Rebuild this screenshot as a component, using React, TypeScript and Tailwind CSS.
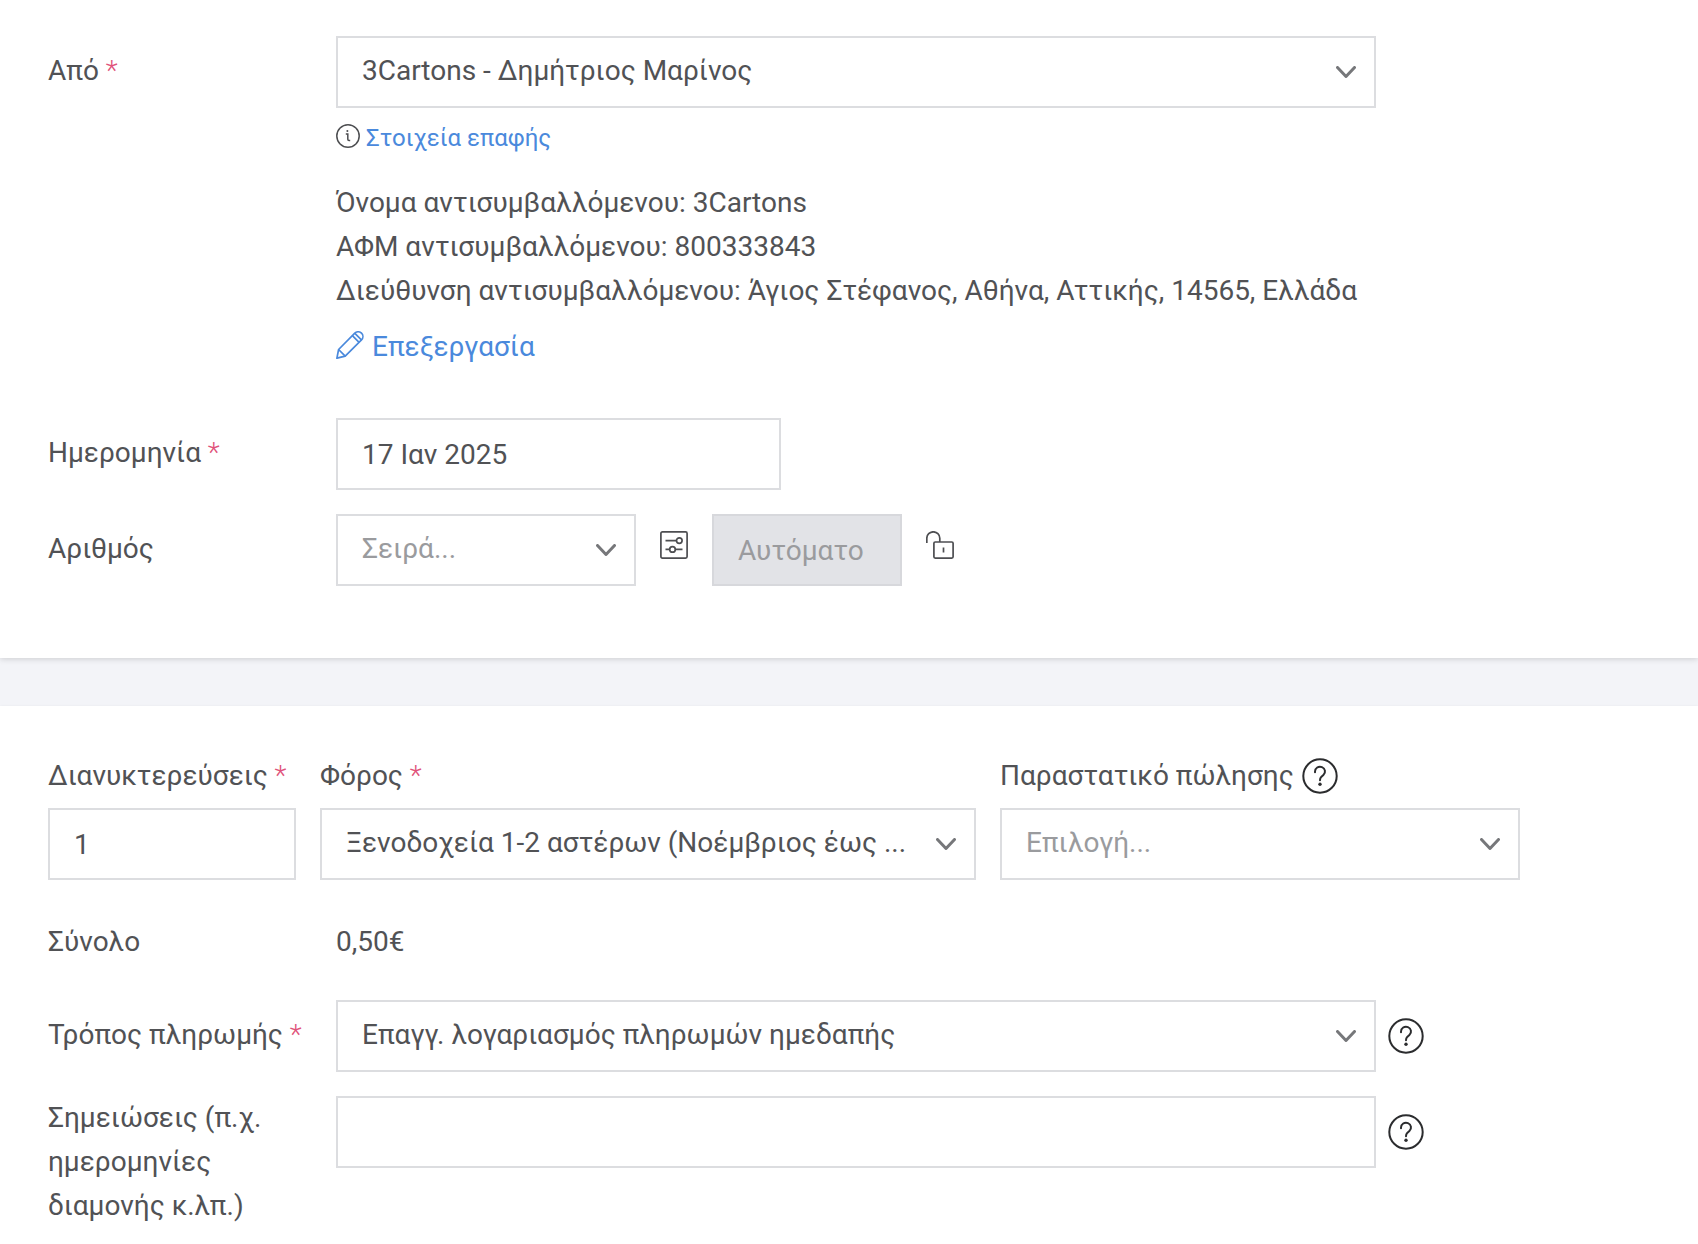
import type { ReactNode } from "react";

const fieldStyle =
  "block h-[72px] w-full rounded-none border-2 border-[#dcdde0] bg-white px-6 outline-none focus:border-[#4a89dc]";

const Required = () => <span className="font-light text-[#e0527a]"> *</span>;

const ChevronIcon = () => (
  <svg
    className="pointer-events-none absolute right-5 top-1/2 h-3 w-5 -translate-y-1/2"
    viewBox="0 0 20 12"
    fill="none"
    stroke="#76777a"
    strokeWidth="3"
    strokeLinecap="round"
    strokeLinejoin="round"
  >
    <path d="M1.5 1.5 10 10.5l8.5-9" />
  </svg>
);

const InfoIcon = () => (
  <svg className="mb-1 h-6 w-6" viewBox="0 0 24 24" fill="none" stroke="#4d4e51" strokeWidth="1.5">
    <circle cx="12" cy="12" r="11.2" />
    <path d="M9.8 10h2v5.2q0 1.2 1.2 1.2h1.2" />
    <circle cx="11.4" cy="7" r="1" fill="#4d4e51" stroke="none" />
  </svg>
);

const PencilIcon = () => (
  <svg
    className="mb-1 h-7 w-7"
    viewBox="0 0 28 28"
    fill="none"
    stroke="currentColor"
    strokeWidth="1.7"
    strokeLinejoin="round"
  >
    <path d="M.9 27.2 2.6 18.5 18.8 2.2a4.7 4.7 0 0 1 6.7 6.7L9.2 25.2z" />
    <path d="m2.6 18.5 6.6 6.7M16.4 4.6l6.7 6.7M18.9 2.4l6.5 6.5" />
  </svg>
);

const SettingsIcon = () => (
  <svg className="h-7 w-7" viewBox="0 0 28 28" fill="none" stroke="#4d4e51" strokeWidth="1.7">
    <rect x="0.9" y="0.9" width="26.2" height="26.2" rx="1.5" />
    <path d="M5.5 9.6h11M5.5 18.4h4.2M15.3 18.4h7.2" />
    <circle cx="19.3" cy="9.6" r="2.8" />
    <circle cx="12.5" cy="18.4" r="2.8" />
  </svg>
);

const UnlockIcon = () => (
  <svg className="h-7 w-7" viewBox="0 0 28 28" fill="none" stroke="#4d4e51" strokeWidth="1.7">
    <path d="M.8 12V7.3a6.5 6.5 0 0 1 13 0V11" />
    <rect x="7.9" y="11" width="19.2" height="16.1" rx="1.3" />
    <path d="M17.5 16.5v5" />
  </svg>
);

const HelpButton = () => (
  <button type="button" aria-label="Βοήθεια" className="shrink-0 cursor-pointer">
    <svg className="h-9 w-9" viewBox="0 0 36 36" fill="none" stroke="#2b2c2e" strokeWidth="2">
      <circle cx="18" cy="18" r="16.7" />
      <path d="M13 14.2v-.6a5 4.8 0 1 1 8.4 3.4l-2.2 2c-.9.8-1.2 1.5-1.2 3.2" strokeLinecap="round" />
      <circle cx="18" cy="26.3" r="1.7" fill="#2b2c2e" stroke="none" />
    </svg>
  </button>
);

type SelectProps = {
  id: string;
  options: string[];
  placeholder?: boolean;
};

const SelectField = ({ id, options, placeholder }: SelectProps) => (
  <div className="relative">
    <select
      id={id}
      className={`${fieldStyle} appearance-none pr-14 pb-0.5 text-ellipsis ${placeholder ? "text-[#9a9b9e]" : ""}`}
    >
      {options.map((option) => (
        <option key={option}>{option}</option>
      ))}
    </select>
    <ChevronIcon />
  </div>
);

type RowProps = {
  id?: string;
  label: string;
  required?: boolean;
  children: ReactNode;
};

const Row = ({ id, label, required, children }: RowProps) => (
  <div className="flex items-start">
    <label htmlFor={id} className="w-72 shrink-0 pt-[13px]">
      {label}
      {required && <Required />}
    </label>
    {children}
  </div>
);

const App = () => {
  return (
    <div className="bg-[#f3f4f8] font-['Roboto','Noto_Sans',sans-serif] text-[28px] leading-11 text-[#515255]">
      <section className="flex flex-col gap-6 bg-white px-12 pt-9 pb-18 shadow-[0_1px_6px_rgba(0,0,0,0.16)]">
        <Row id="from" label="Από" required>
          <div className="max-w-[1040px] flex-1">
            <SelectField id="from" options={["3Cartons - Δημήτριος Μαρίνος"]} />
            <a href="#contact" className="mt-2 flex items-center gap-1.5 text-2xl leading-11 text-[#4a89dc]">
              <InfoIcon />
              Στοιχεία επαφής
            </a>
            <div className="mt-[21px]">
              <p>Όνομα αντισυμβαλλόμενου: 3Cartons</p>
              <p>ΑΦΜ αντισυμβαλλόμενου: 800333843</p>
              <p>Διεύθυνση αντισυμβαλλόμενου: Άγιος Στέφανος, Αθήνα, Αττικής, 14565, Ελλάδα</p>
            </div>
            <a href="#edit" className="mt-3 mb-[25px] flex items-center gap-2 text-[#4a89dc]">
              <PencilIcon />
              Επεξεργασία
            </a>
          </div>
        </Row>

        <Row id="date" label="Ημερομηνία" required>
          <div className="w-[445px]">
            <input id="date" type="text" defaultValue="17 Ιαν 2025" className={fieldStyle} />
          </div>
        </Row>

        <Row id="series" label="Αριθμός">
          <div className="flex items-center gap-6">
            <div className="w-[300px]">
              <SelectField id="series" options={["Σειρά..."]} placeholder />
            </div>
            <button type="button" aria-label="Ρυθμίσεις σειράς" className="mb-2.5 cursor-pointer">
              <SettingsIcon />
            </button>
            <input
              type="text"
              aria-label="Αριθμός παραστατικού"
              placeholder="Αυτόματο"
              disabled
              className="h-[72px] w-[190px] border-2 border-[#d7d8dc] bg-[#e2e3e7] px-6 placeholder:text-[#9a9b9e]"
            />
            <button type="button" aria-label="Ξεκλείδωμα" className="mb-2.5 cursor-pointer">
              <UnlockIcon />
            </button>
          </div>
        </Row>
      </section>

      <section className="mt-12 bg-white px-12 pt-12 pb-6 shadow-[0_1px_3px_rgba(0,0,0,0.1)]">
        <div className="flex gap-6">
          <div className="w-[248px]">
            <label htmlFor="nights" className="mb-2.5 block">
              Διανυκτερεύσεις
              <Required />
            </label>
            <input id="nights" type="text" defaultValue="1" className={fieldStyle} />
          </div>
          <div className="w-[656px]">
            <label htmlFor="tax" className="mb-2.5 block">
              Φόρος
              <Required />
            </label>
            <SelectField id="tax" options={["Ξενοδοχεία 1-2 αστέρων (Νοέμβριος έως ..."]} />
          </div>
          <div className="w-[520px]">
            <div className="mb-2.5 flex items-center gap-2">
              <label htmlFor="document">Παραστατικό πώλησης</label>
              <HelpButton />
            </div>
            <SelectField id="document" options={["Επιλογή..."]} placeholder />
          </div>
        </div>

        <div className="mt-10 flex">
          <span className="w-72">Σύνολο</span>
          <span>0,50€</span>
        </div>

        <div className="mt-9 flex flex-col gap-6">
          <Row id="payment" label="Τρόπος πληρωμής" required>
            <div className="flex flex-1 items-center gap-3">
              <div className="max-w-[1040px] flex-1">
                <SelectField id="payment" options={["Επαγγ. λογαριασμός πληρωμών ημεδαπής"]} />
              </div>
              <HelpButton />
            </div>
          </Row>
          <div className="flex items-start">
            <label htmlFor="notes" className="w-72 shrink-0 pr-12">
              Σημειώσεις (π.χ. ημερομηνίες διαμονής κ.λπ.)
            </label>
            <div className="flex flex-1 items-center gap-3">
              <div className="max-w-[1040px] flex-1">
                <input id="notes" type="text" className={fieldStyle} />
              </div>
              <HelpButton />
            </div>
          </div>
        </div>
      </section>
    </div>
  );
};

export default App;
